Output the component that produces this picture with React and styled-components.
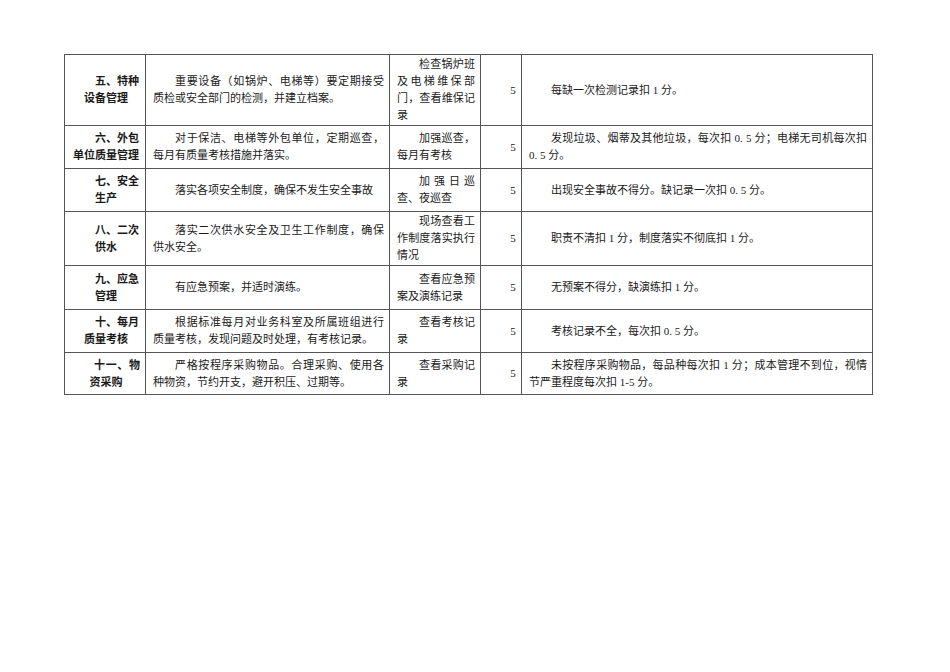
import React from 'react';
import styled, { createGlobalStyle } from 'styled-components';

const GlobalStyle = createGlobalStyle`
  html, body {
    margin: 0;
    padding: 0;
    background: #fff;
  }
  body {
    font-family: "Liberation Serif", "Noto Sans CJK SC", serif;
    color: #1a1a1a;
  }
`;

const Page = styled.div`
  width: 950px;
  height: 672px;
  padding: 54px 0 0 64px;
  box-sizing: border-box;
`;

const Table = styled.table`
  border-collapse: collapse;
  table-layout: fixed;
  width: 809px;
  font-size: 11px;
  line-height: 17px;
`;

const Col = styled.col`
  width: ${p => p.$w}px;
`;

const Row = styled.tr`
  height: ${p => p.$h}px;
`;

const Cell = styled.td`
  border: 1px solid #555;
  padding: 0 5px 0 7px;
  vertical-align: middle;
  font-weight: ${p => (p.$bold ? 'bold' : 'normal')};
  overflow: hidden;
`;

const Line = styled.span`
  display: block;
  white-space: nowrap;
  text-indent: ${p => (p.$indent ? '22px' : '0')};
  text-align: ${p => (p.$justify ? 'justify' : p.$align || 'left')};
  text-align-last: ${p => (p.$justify ? 'justify' : 'auto')};
`;

const colWidths = [81, 244, 91, 41, 351];

// each line: [text, justify]
const rows = [
  {
    h: 71,
    title: [['五、特种'], ['设备管理']],
    req: [['重要设备（如锅炉、电梯等）要定期接受', true], ['质检或安全部门的检测，并建立档案。']],
    check: [['检查锅炉班', true], ['及电梯维保部', true], ['门，查看维保记', true], ['录']],
    rule: [['每缺一次检测记录扣 1 分。']],
  },
  {
    h: 43,
    title: [['六、外包'], ['单位质量管理']],
    req: [['对于保洁、电梯等外包单位，定期巡查，', true], ['每月有质量考核措施并落实。']],
    check: [['加强巡查，', true], ['每月有考核']],
    rule: [['发现垃圾、烟蒂及其他垃圾，每次扣 0. 5 分；电梯无司机每次扣', true], ['0. 5 分。']],
  },
  {
    h: 43,
    title: [['七、安全'], ['生产']],
    req: [['落实各项安全制度，确保不发生安全事故']],
    check: [['加强日巡', true], ['查、夜巡查']],
    rule: [['出现安全事故不得分。缺记录一次扣 0. 5 分。']],
  },
  {
    h: 54,
    title: [['八、二次'], ['供水']],
    req: [['落实二次供水安全及卫生工作制度，确保', true], ['供水安全。']],
    check: [['现场查看工', true], ['作制度落实执行', true], ['情况']],
    rule: [['职责不清扣 1 分，制度落实不彻底扣 1 分。']],
  },
  {
    h: 44,
    title: [['九、应急'], ['管理']],
    req: [['有应急预案，并适时演练。']],
    check: [['查看应急预', true], ['案及演练记录']],
    rule: [['无预案不得分，缺演练扣 1 分。']],
  },
  {
    h: 43,
    title: [['十、每月'], ['质量考核']],
    req: [['根据标准每月对业务科室及所属班组进行', true], ['质量考核，发现问题及时处理，有考核记录。']],
    check: [['查看考核记', true], ['录']],
    rule: [['考核记录不全，每次扣 0. 5 分。']],
  },
  {
    h: 42,
    title: [['十一、物', true], ['资采购']],
    req: [['严格按程序采购物品。合理采购、使用各', true], ['种物资，节约开支，避开积压、过期等。']],
    check: [['查看采购记', true], ['录']],
    rule: [['未按程序采购物品，每品种每次扣 1 分；成本管理不到位，视情', true], ['节严重程度每次扣 1-5 分。']],
  },
];

const Lines = ({ items, align }) =>
  items.map(([text, justify], i) => (
    <Line key={i} $indent={i === 0} $justify={justify} $align={align}>
      {text}
    </Line>
  ));

export default function App() {
  return (
    <>
      <GlobalStyle />
      <Page>
        <Table>
          <colgroup>
            {colWidths.map((w, i) => (
              <Col key={i} $w={w} />
            ))}
          </colgroup>
          <tbody>
            {rows.map((r, i) => (
              <Row key={i} $h={r.h}>
                <Cell $bold>
                  <Lines items={r.title} align="center" />
                </Cell>
                <Cell>
                  <Lines items={r.req} />
                </Cell>
                <Cell>
                  <Lines items={r.check} />
                </Cell>
                <Cell>
                  <Lines items={[['5']]} align="center" />
                </Cell>
                <Cell>
                  <Lines items={r.rule} />
                </Cell>
              </Row>
            ))}
          </tbody>
        </Table>
      </Page>
    </>
  );
}
